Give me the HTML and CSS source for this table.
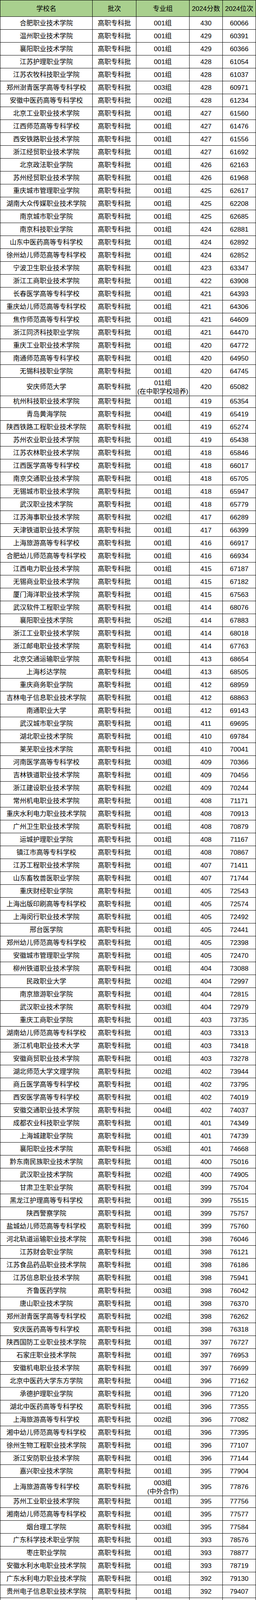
FILE: index.html
```html
<!DOCTYPE html>
<html lang="zh-CN">
<head>
<meta charset="utf-8">
<title>2024高职专科批录取分数</title>
<link rel="stylesheet" href="styles.css">
</head>
<body>
<div class="sheet" role="table">
<div class="row head" role="row"><div class="cell">学校名</div><div class="cell">批次</div><div class="cell">专业组</div><div class="cell">2024分数</div><div class="cell">2024位次</div></div>
<div class="row"><div class="cell">合肥职业技术学院</div><div class="cell">高职专科批</div><div class="cell">001组</div><div class="cell">430</div><div class="cell">60066</div></div>
<div class="row"><div class="cell">温州职业技术学院</div><div class="cell">高职专科批</div><div class="cell">001组</div><div class="cell">429</div><div class="cell">60391</div></div>
<div class="row"><div class="cell">襄阳职业技术学院</div><div class="cell">高职专科批</div><div class="cell">001组</div><div class="cell">429</div><div class="cell">60366</div></div>
<div class="row"><div class="cell">江苏护理职业学院</div><div class="cell">高职专科批</div><div class="cell">001组</div><div class="cell">428</div><div class="cell">61054</div></div>
<div class="row"><div class="cell">江苏农牧科技职业学院</div><div class="cell">高职专科批</div><div class="cell">001组</div><div class="cell">428</div><div class="cell">61037</div></div>
<div class="row"><div class="cell">郑州澍青医学高等专科学校</div><div class="cell">高职专科批</div><div class="cell">003组</div><div class="cell">428</div><div class="cell">60971</div></div>
<div class="row"><div class="cell">安徽中医药高等专科学校</div><div class="cell">高职专科批</div><div class="cell">002组</div><div class="cell">428</div><div class="cell">61234</div></div>
<div class="row"><div class="cell">北京工业职业技术学院</div><div class="cell">高职专科批</div><div class="cell">001组</div><div class="cell">427</div><div class="cell">61560</div></div>
<div class="row"><div class="cell">江西师范高等专科学校</div><div class="cell">高职专科批</div><div class="cell">001组</div><div class="cell">427</div><div class="cell">61476</div></div>
<div class="row"><div class="cell">西安铁路职业技术学院</div><div class="cell">高职专科批</div><div class="cell">001组</div><div class="cell">427</div><div class="cell">61556</div></div>
<div class="row"><div class="cell">浙江经贸职业技术学院</div><div class="cell">高职专科批</div><div class="cell">001组</div><div class="cell">427</div><div class="cell">61692</div></div>
<div class="row"><div class="cell">北京政法职业学院</div><div class="cell">高职专科批</div><div class="cell">001组</div><div class="cell">426</div><div class="cell">62163</div></div>
<div class="row"><div class="cell">苏州经贸职业技术学院</div><div class="cell">高职专科批</div><div class="cell">001组</div><div class="cell">426</div><div class="cell">61968</div></div>
<div class="row"><div class="cell">重庆城市管理职业学院</div><div class="cell">高职专科批</div><div class="cell">001组</div><div class="cell">425</div><div class="cell">62617</div></div>
<div class="row"><div class="cell">湖南大众传媒职业技术学院</div><div class="cell">高职专科批</div><div class="cell">001组</div><div class="cell">425</div><div class="cell">62208</div></div>
<div class="row"><div class="cell">南京城市职业学院</div><div class="cell">高职专科批</div><div class="cell">001组</div><div class="cell">425</div><div class="cell">62685</div></div>
<div class="row"><div class="cell">南京科技职业学院</div><div class="cell">高职专科批</div><div class="cell">001组</div><div class="cell">424</div><div class="cell">62881</div></div>
<div class="row"><div class="cell">山东中医药高等专科学校</div><div class="cell">高职专科批</div><div class="cell">001组</div><div class="cell">424</div><div class="cell">62892</div></div>
<div class="row"><div class="cell">徐州幼儿师范高等专科学校</div><div class="cell">高职专科批</div><div class="cell">001组</div><div class="cell">424</div><div class="cell">62852</div></div>
<div class="row"><div class="cell">宁波卫生职业技术学院</div><div class="cell">高职专科批</div><div class="cell">001组</div><div class="cell">423</div><div class="cell">63347</div></div>
<div class="row"><div class="cell">浙江工商职业技术学院</div><div class="cell">高职专科批</div><div class="cell">001组</div><div class="cell">422</div><div class="cell">63908</div></div>
<div class="row"><div class="cell">长春医学高等专科学校</div><div class="cell">高职专科批</div><div class="cell">001组</div><div class="cell">421</div><div class="cell">64393</div></div>
<div class="row"><div class="cell">重庆幼儿师范高等专科学校</div><div class="cell">高职专科批</div><div class="cell">001组</div><div class="cell">421</div><div class="cell">64306</div></div>
<div class="row"><div class="cell">焦作师范高等专科学校</div><div class="cell">高职专科批</div><div class="cell">001组</div><div class="cell">421</div><div class="cell">64609</div></div>
<div class="row"><div class="cell">浙江同济科技职业学院</div><div class="cell">高职专科批</div><div class="cell">001组</div><div class="cell">421</div><div class="cell">64470</div></div>
<div class="row"><div class="cell">重庆工业职业技术学院</div><div class="cell">高职专科批</div><div class="cell">001组</div><div class="cell">420</div><div class="cell">64772</div></div>
<div class="row"><div class="cell">南通师范高等专科学校</div><div class="cell">高职专科批</div><div class="cell">001组</div><div class="cell">420</div><div class="cell">64950</div></div>
<div class="row"><div class="cell">无锡科技职业学院</div><div class="cell">高职专科批</div><div class="cell">001组</div><div class="cell">420</div><div class="cell">64745</div></div>
<div class="row tall"><div class="cell">安庆师范大学</div><div class="cell">高职专科批</div><div class="cell two"><span class="lines">011组<br>(在中职学校培养)</span></div><div class="cell">420</div><div class="cell">65082</div></div>
<div class="row"><div class="cell">杭州科技职业技术学院</div><div class="cell">高职专科批</div><div class="cell">001组</div><div class="cell">419</div><div class="cell">65354</div></div>
<div class="row"><div class="cell">青岛黄海学院</div><div class="cell">高职专科批</div><div class="cell">004组</div><div class="cell">419</div><div class="cell">65419</div></div>
<div class="row"><div class="cell">陕西铁路工程职业技术学院</div><div class="cell">高职专科批</div><div class="cell">001组</div><div class="cell">419</div><div class="cell">65274</div></div>
<div class="row"><div class="cell">苏州农业职业技术学院</div><div class="cell">高职专科批</div><div class="cell">001组</div><div class="cell">419</div><div class="cell">65438</div></div>
<div class="row"><div class="cell">江苏农林职业技术学院</div><div class="cell">高职专科批</div><div class="cell">001组</div><div class="cell">418</div><div class="cell">65846</div></div>
<div class="row"><div class="cell">江西医学高等专科学校</div><div class="cell">高职专科批</div><div class="cell">001组</div><div class="cell">418</div><div class="cell">66017</div></div>
<div class="row"><div class="cell">南京交通职业技术学院</div><div class="cell">高职专科批</div><div class="cell">001组</div><div class="cell">418</div><div class="cell">65705</div></div>
<div class="row"><div class="cell">无锡城市职业技术学院</div><div class="cell">高职专科批</div><div class="cell">001组</div><div class="cell">418</div><div class="cell">65947</div></div>
<div class="row"><div class="cell">武汉职业技术学院</div><div class="cell">高职专科批</div><div class="cell">001组</div><div class="cell">418</div><div class="cell">65779</div></div>
<div class="row"><div class="cell">江苏海事职业技术学院</div><div class="cell">高职专科批</div><div class="cell">002组</div><div class="cell">417</div><div class="cell">66289</div></div>
<div class="row"><div class="cell">天津铁道职业技术学院</div><div class="cell">高职专科批</div><div class="cell">001组</div><div class="cell">417</div><div class="cell">66399</div></div>
<div class="row"><div class="cell">上海旅游高等专科学校</div><div class="cell">高职专科批</div><div class="cell">001组</div><div class="cell">416</div><div class="cell">66917</div></div>
<div class="row"><div class="cell">合肥幼儿师范高等专科学校</div><div class="cell">高职专科批</div><div class="cell">001组</div><div class="cell">416</div><div class="cell">66934</div></div>
<div class="row"><div class="cell">江西电力职业技术学院</div><div class="cell">高职专科批</div><div class="cell">001组</div><div class="cell">415</div><div class="cell">67187</div></div>
<div class="row"><div class="cell">无锡商业职业技术学院</div><div class="cell">高职专科批</div><div class="cell">001组</div><div class="cell">415</div><div class="cell">67182</div></div>
<div class="row"><div class="cell">厦门海洋职业技术学院</div><div class="cell">高职专科批</div><div class="cell">001组</div><div class="cell">415</div><div class="cell">67563</div></div>
<div class="row"><div class="cell">武汉软件工程职业学院</div><div class="cell">高职专科批</div><div class="cell">001组</div><div class="cell">414</div><div class="cell">68076</div></div>
<div class="row"><div class="cell">襄阳职业技术学院</div><div class="cell">高职专科批</div><div class="cell">052组</div><div class="cell">414</div><div class="cell">67883</div></div>
<div class="row"><div class="cell">浙江工业职业技术学院</div><div class="cell">高职专科批</div><div class="cell">001组</div><div class="cell">414</div><div class="cell">68018</div></div>
<div class="row"><div class="cell">浙江邮电职业技术学院</div><div class="cell">高职专科批</div><div class="cell">001组</div><div class="cell">414</div><div class="cell">67763</div></div>
<div class="row"><div class="cell">北京交通运输职业学院</div><div class="cell">高职专科批</div><div class="cell">001组</div><div class="cell">413</div><div class="cell">68654</div></div>
<div class="row"><div class="cell">上海杉达学院</div><div class="cell">高职专科批</div><div class="cell">004组</div><div class="cell">413</div><div class="cell">68505</div></div>
<div class="row"><div class="cell">重庆商务职业学院</div><div class="cell">高职专科批</div><div class="cell">001组</div><div class="cell">412</div><div class="cell">68959</div></div>
<div class="row"><div class="cell">吉林电子信息职业技术学院</div><div class="cell">高职专科批</div><div class="cell">001组</div><div class="cell">412</div><div class="cell">68863</div></div>
<div class="row"><div class="cell">南通职业大学</div><div class="cell">高职专科批</div><div class="cell">001组</div><div class="cell">412</div><div class="cell">69143</div></div>
<div class="row"><div class="cell">武汉城市职业学院</div><div class="cell">高职专科批</div><div class="cell">001组</div><div class="cell">411</div><div class="cell">69695</div></div>
<div class="row"><div class="cell">湖北职业技术学院</div><div class="cell">高职专科批</div><div class="cell">001组</div><div class="cell">410</div><div class="cell">69784</div></div>
<div class="row"><div class="cell">莱芜职业技术学院</div><div class="cell">高职专科批</div><div class="cell">001组</div><div class="cell">410</div><div class="cell">70041</div></div>
<div class="row"><div class="cell">河南医学高等专科学校</div><div class="cell">高职专科批</div><div class="cell">003组</div><div class="cell">409</div><div class="cell">70366</div></div>
<div class="row"><div class="cell">吉林铁道职业技术学院</div><div class="cell">高职专科批</div><div class="cell">001组</div><div class="cell">409</div><div class="cell">70456</div></div>
<div class="row"><div class="cell">浙江建设职业技术学院</div><div class="cell">高职专科批</div><div class="cell">002组</div><div class="cell">409</div><div class="cell">70244</div></div>
<div class="row"><div class="cell">常州机电职业技术学院</div><div class="cell">高职专科批</div><div class="cell">001组</div><div class="cell">408</div><div class="cell">71171</div></div>
<div class="row"><div class="cell">重庆水利电力职业技术学院</div><div class="cell">高职专科批</div><div class="cell">001组</div><div class="cell">408</div><div class="cell">70913</div></div>
<div class="row"><div class="cell">广州卫生职业技术学院</div><div class="cell">高职专科批</div><div class="cell">001组</div><div class="cell">408</div><div class="cell">70879</div></div>
<div class="row"><div class="cell">运城护理职业学院</div><div class="cell">高职专科批</div><div class="cell">001组</div><div class="cell">408</div><div class="cell">71167</div></div>
<div class="row"><div class="cell">镇江市高等专科学校</div><div class="cell">高职专科批</div><div class="cell">001组</div><div class="cell">408</div><div class="cell">70867</div></div>
<div class="row"><div class="cell">江苏工程职业技术学院</div><div class="cell">高职专科批</div><div class="cell">001组</div><div class="cell">407</div><div class="cell">71411</div></div>
<div class="row"><div class="cell">山东畜牧兽医职业学院</div><div class="cell">高职专科批</div><div class="cell">001组</div><div class="cell">407</div><div class="cell">71744</div></div>
<div class="row"><div class="cell">重庆财经职业学院</div><div class="cell">高职专科批</div><div class="cell">001组</div><div class="cell">405</div><div class="cell">72543</div></div>
<div class="row"><div class="cell">上海出版印刷高等专科学校</div><div class="cell">高职专科批</div><div class="cell">001组</div><div class="cell">405</div><div class="cell">72574</div></div>
<div class="row"><div class="cell">上海闵行职业技术学院</div><div class="cell">高职专科批</div><div class="cell">001组</div><div class="cell">405</div><div class="cell">72492</div></div>
<div class="row"><div class="cell">邢台医学院</div><div class="cell">高职专科批</div><div class="cell">001组</div><div class="cell">405</div><div class="cell">72441</div></div>
<div class="row"><div class="cell">郑州幼儿师范高等专科学校</div><div class="cell">高职专科批</div><div class="cell">001组</div><div class="cell">405</div><div class="cell">72398</div></div>
<div class="row"><div class="cell">安徽城市管理职业学院</div><div class="cell">高职专科批</div><div class="cell">001组</div><div class="cell">405</div><div class="cell">72470</div></div>
<div class="row"><div class="cell">柳州铁道职业技术学院</div><div class="cell">高职专科批</div><div class="cell">001组</div><div class="cell">404</div><div class="cell">73088</div></div>
<div class="row"><div class="cell">民政职业大学</div><div class="cell">高职专科批</div><div class="cell">002组</div><div class="cell">404</div><div class="cell">72997</div></div>
<div class="row"><div class="cell">南京旅游职业学院</div><div class="cell">高职专科批</div><div class="cell">001组</div><div class="cell">404</div><div class="cell">72815</div></div>
<div class="row"><div class="cell">武汉职业技术学院</div><div class="cell">高职专科批</div><div class="cell">003组</div><div class="cell">404</div><div class="cell">72979</div></div>
<div class="row"><div class="cell">重庆工商职业学院</div><div class="cell">高职专科批</div><div class="cell">001组</div><div class="cell">403</div><div class="cell">73735</div></div>
<div class="row"><div class="cell">湖南幼儿师范高等专科学校</div><div class="cell">高职专科批</div><div class="cell">001组</div><div class="cell">403</div><div class="cell">73313</div></div>
<div class="row"><div class="cell">浙江机电职业技术大学</div><div class="cell">高职专科批</div><div class="cell">001组</div><div class="cell">403</div><div class="cell">73418</div></div>
<div class="row"><div class="cell">安徽商贸职业技术学院</div><div class="cell">高职专科批</div><div class="cell">001组</div><div class="cell">403</div><div class="cell">73278</div></div>
<div class="row"><div class="cell">湖北师范大学文理学院</div><div class="cell">高职专科批</div><div class="cell">002组</div><div class="cell">402</div><div class="cell">73944</div></div>
<div class="row"><div class="cell">商丘医学高等专科学校</div><div class="cell">高职专科批</div><div class="cell">001组</div><div class="cell">402</div><div class="cell">73795</div></div>
<div class="row"><div class="cell">西安医学高等专科学校</div><div class="cell">高职专科批</div><div class="cell">001组</div><div class="cell">402</div><div class="cell">74019</div></div>
<div class="row"><div class="cell">安徽交通职业技术学院</div><div class="cell">高职专科批</div><div class="cell">004组</div><div class="cell">402</div><div class="cell">74037</div></div>
<div class="row"><div class="cell">成都农业科技职业学院</div><div class="cell">高职专科批</div><div class="cell">001组</div><div class="cell">401</div><div class="cell">74349</div></div>
<div class="row"><div class="cell">上海城建职业学院</div><div class="cell">高职专科批</div><div class="cell">001组</div><div class="cell">401</div><div class="cell">74739</div></div>
<div class="row"><div class="cell">襄阳职业技术学院</div><div class="cell">高职专科批</div><div class="cell">053组</div><div class="cell">401</div><div class="cell">74668</div></div>
<div class="row"><div class="cell">黔东南民族职业技术学院</div><div class="cell">高职专科批</div><div class="cell">001组</div><div class="cell">400</div><div class="cell">75016</div></div>
<div class="row"><div class="cell">武汉职业技术学院</div><div class="cell">高职专科批</div><div class="cell">002组</div><div class="cell">400</div><div class="cell">74905</div></div>
<div class="row"><div class="cell">甘肃卫生职业学院</div><div class="cell">高职专科批</div><div class="cell">001组</div><div class="cell">399</div><div class="cell">75704</div></div>
<div class="row"><div class="cell">黑龙江护理高等专科学校</div><div class="cell">高职专科批</div><div class="cell">001组</div><div class="cell">399</div><div class="cell">75515</div></div>
<div class="row"><div class="cell">陕西警察学院</div><div class="cell">高职专科批</div><div class="cell">001组</div><div class="cell">399</div><div class="cell">75757</div></div>
<div class="row"><div class="cell">盐城幼儿师范高等专科学校</div><div class="cell">高职专科批</div><div class="cell">001组</div><div class="cell">399</div><div class="cell">75760</div></div>
<div class="row"><div class="cell">河北轨道运输职业技术学院</div><div class="cell">高职专科批</div><div class="cell">001组</div><div class="cell">398</div><div class="cell">76046</div></div>
<div class="row"><div class="cell">江苏财会职业学院</div><div class="cell">高职专科批</div><div class="cell">001组</div><div class="cell">398</div><div class="cell">76121</div></div>
<div class="row"><div class="cell">江苏食品药品职业技术学院</div><div class="cell">高职专科批</div><div class="cell">001组</div><div class="cell">398</div><div class="cell">76186</div></div>
<div class="row"><div class="cell">江苏信息职业技术学院</div><div class="cell">高职专科批</div><div class="cell">001组</div><div class="cell">398</div><div class="cell">75941</div></div>
<div class="row"><div class="cell">齐鲁医药学院</div><div class="cell">高职专科批</div><div class="cell">003组</div><div class="cell">398</div><div class="cell">76042</div></div>
<div class="row"><div class="cell">唐山职业技术学院</div><div class="cell">高职专科批</div><div class="cell">001组</div><div class="cell">398</div><div class="cell">76370</div></div>
<div class="row"><div class="cell">郑州澍青医学高等专科学校</div><div class="cell">高职专科批</div><div class="cell">002组</div><div class="cell">398</div><div class="cell">76262</div></div>
<div class="row"><div class="cell">安庆医药高等专科学校</div><div class="cell">高职专科批</div><div class="cell">001组</div><div class="cell">398</div><div class="cell">76318</div></div>
<div class="row"><div class="cell">陕西国防工业职业技术学院</div><div class="cell">高职专科批</div><div class="cell">001组</div><div class="cell">397</div><div class="cell">76727</div></div>
<div class="row"><div class="cell">石家庄职业技术学院</div><div class="cell">高职专科批</div><div class="cell">001组</div><div class="cell">397</div><div class="cell">76953</div></div>
<div class="row"><div class="cell">安徽机电职业技术学院</div><div class="cell">高职专科批</div><div class="cell">001组</div><div class="cell">397</div><div class="cell">76699</div></div>
<div class="row"><div class="cell">北京中医药大学东方学院</div><div class="cell">高职专科批</div><div class="cell">004组</div><div class="cell">396</div><div class="cell">77162</div></div>
<div class="row"><div class="cell">承德护理职业学院</div><div class="cell">高职专科批</div><div class="cell">001组</div><div class="cell">396</div><div class="cell">77120</div></div>
<div class="row"><div class="cell">湖北中医药高等专科学校</div><div class="cell">高职专科批</div><div class="cell">001组</div><div class="cell">396</div><div class="cell">77355</div></div>
<div class="row"><div class="cell">上海旅游高等专科学校</div><div class="cell">高职专科批</div><div class="cell">002组</div><div class="cell">396</div><div class="cell">77082</div></div>
<div class="row"><div class="cell">湘中幼儿师范高等专科学校</div><div class="cell">高职专科批</div><div class="cell">001组</div><div class="cell">396</div><div class="cell">77395</div></div>
<div class="row"><div class="cell">徐州生物工程职业技术学院</div><div class="cell">高职专科批</div><div class="cell">001组</div><div class="cell">396</div><div class="cell">77107</div></div>
<div class="row"><div class="cell">浙江安防职业技术学院</div><div class="cell">高职专科批</div><div class="cell">001组</div><div class="cell">396</div><div class="cell">77144</div></div>
<div class="row"><div class="cell">嘉兴职业技术学院</div><div class="cell">高职专科批</div><div class="cell">001组</div><div class="cell">395</div><div class="cell">77904</div></div>
<div class="row tall"><div class="cell">上海旅游高等专科学校</div><div class="cell">高职专科批</div><div class="cell two"><span class="lines">003组<br>(中外合作)</span></div><div class="cell">395</div><div class="cell">77876</div></div>
<div class="row"><div class="cell">苏州工业职业技术学院</div><div class="cell">高职专科批</div><div class="cell">001组</div><div class="cell">395</div><div class="cell">77756</div></div>
<div class="row"><div class="cell">湘南幼儿师范高等专科学校</div><div class="cell">高职专科批</div><div class="cell">001组</div><div class="cell">395</div><div class="cell">77577</div></div>
<div class="row"><div class="cell">烟台理工学院</div><div class="cell">高职专科批</div><div class="cell">003组</div><div class="cell">395</div><div class="cell">77584</div></div>
<div class="row"><div class="cell">广东科学技术职业学院</div><div class="cell">高职专科批</div><div class="cell">001组</div><div class="cell">393</div><div class="cell">78576</div></div>
<div class="row"><div class="cell">枣庄职业学院</div><div class="cell">高职专科批</div><div class="cell">001组</div><div class="cell">393</div><div class="cell">78877</div></div>
<div class="row"><div class="cell">安徽水利水电职业技术学院</div><div class="cell">高职专科批</div><div class="cell">001组</div><div class="cell">393</div><div class="cell">78719</div></div>
<div class="row"><div class="cell">广东水利电力职业技术学院</div><div class="cell">高职专科批</div><div class="cell">001组</div><div class="cell">392</div><div class="cell">79130</div></div>
<div class="row"><div class="cell">贵州电子信息职业技术学院</div><div class="cell">高职专科批</div><div class="cell">001组</div><div class="cell">392</div><div class="cell">79407</div></div>
<div class="row"><div class="cell">菏泽医学专科学校</div><div class="cell">高职专科批</div><div class="cell">001组</div><div class="cell">392</div><div class="cell">79173</div></div>
<div class="row"><div class="cell">湖北铁道运输职业学院</div><div class="cell">高职专科批</div><div class="cell">001组</div><div class="cell">392</div><div class="cell">79110</div></div>
<div class="row"><div class="cell">四川工程职业技术大学</div><div class="cell">高职专科批</div><div class="cell">001组</div><div class="cell">392</div><div class="cell">79041</div></div>
<div class="row tall"><div class="cell">淮南师范学院</div><div class="cell">高职专科批</div><div class="cell two"><span class="lines">005组<br>(在中职学校培养)</span></div><div class="cell">392</div><div class="cell">79135</div></div>
<div class="row"><div class="cell">焦作大学</div><div class="cell">高职专科批</div><div class="cell">001组</div><div class="cell">391</div><div class="cell">79926</div></div>
</div>
</body>
</html>
```

FILE: styles.css
```css
html, body {
  margin: 0;
  padding: 0;
  background: #ffffff;
}

html {
  overflow: hidden;
}

.sheet {
  width: 655px;
  box-sizing: border-box;
  border-top: 1px solid #000;
  border-left: 1px solid #000;
  font-family: "Liberation Sans", "Noto Sans CJK SC", sans-serif;
  font-size: 17px;
  color: #000;
}

.row {
  display: grid;
  grid-template-columns: 236px 112px 136px 85px 85px;
  height: 33px;
}

.row.head {
  height: 42px;
  background: #a9d08e;
}

.row.tall {
  height: 44px;
}

.cell {
  box-sizing: border-box;
  border-right: 1px solid #000;
  border-bottom: 1px solid #000;
  padding-top: 1px;
  display: flex;
  align-items: center;
  justify-content: center;
  text-align: center;
  white-space: nowrap;
  line-height: 21.5px;
}

.row.head .cell {
  padding-top: 3px;
}

.cell.two {
  padding-top: 3px;
}

.lines {
  display: block;
}
```
